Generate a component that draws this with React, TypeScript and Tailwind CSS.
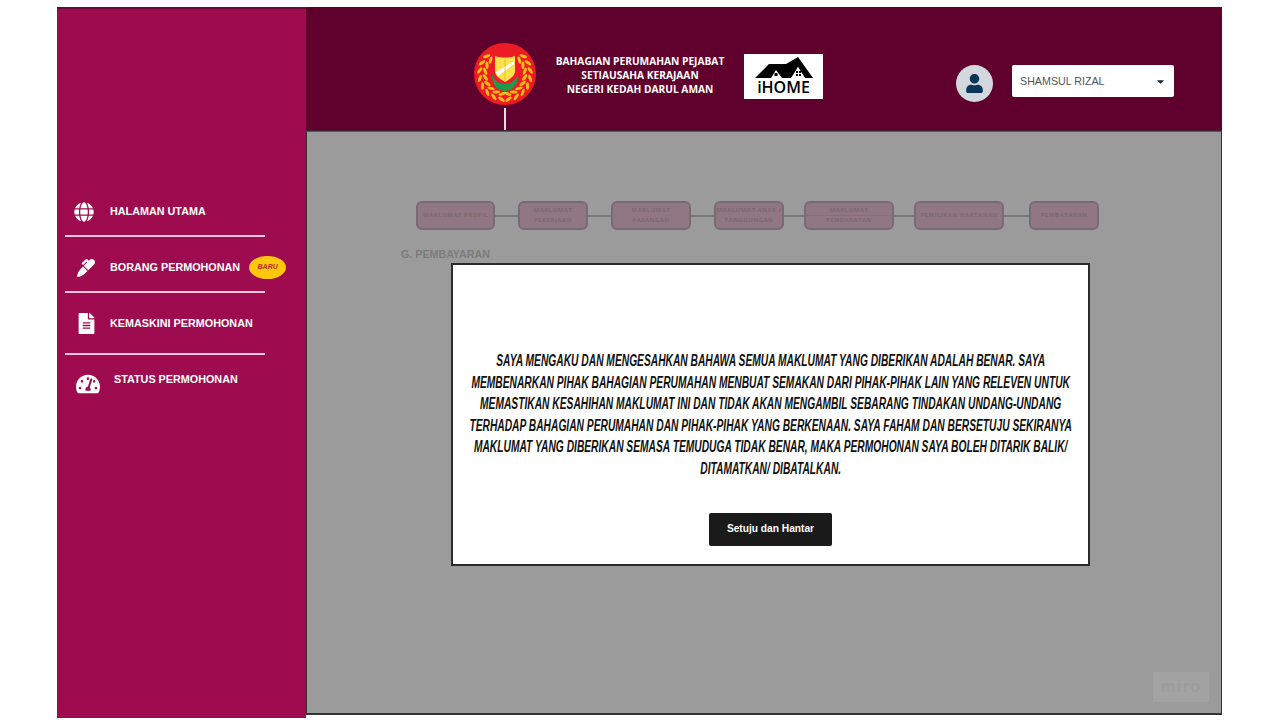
import { FaCaretDown, FaFileAlt, FaGlobe, FaMarker, FaTachometerAlt, FaUser } from 'react-icons/fa';

const steps = [
  { lines: ['MAKLUMAT PROFIL'], box: 'w-[79px]', gap: 'w-[23px]' },
  { lines: ['MAKLUMAT', 'PEKERJAAN'], box: 'w-[70px]', gap: 'w-[23px]' },
  { lines: ['MAKLUMAT', 'PASANGAN'], box: 'w-[80px]', gap: 'w-[23px]' },
  { lines: ['MAKLUMAT ANAK /', 'TANGGUNGAN'], box: 'w-[70px]', gap: 'w-[20px]' },
  { lines: ['MAKLUMAT', 'PENDAPATAN'], box: 'w-[90px]', gap: 'w-[20px]', crossed: true },
  { lines: ['PEMILIKAN HARTANAH'], box: 'w-[90px]', gap: 'w-[25px]' },
  { lines: ['PEMBAYARAN'], box: 'w-[70px]', gap: '' },
];

const declaration = [
  'Saya mengaku dan mengesahkan bahawa semua maklumat yang diberikan adalah benar. Saya',
  'membenarkan pihak Bahagian Perumahan menbuat semakan dari pihak-pihak lain yang releven untuk',
  'memastikan kesahihan maklumat ini dan tidak akan mengambil sebarang tindakan undang-undang',
  'terhadap Bahagian Perumahan dan pihak-pihak yang berkenaan. Saya faham dan bersetuju sekiranya',
  'maklumat yang diberikan semasa temuduga tidak benar, maka permohonan saya boleh ditarik balik/',
  'ditamatkan/ dibatalkan.',
];

// angle in degrees, measured from the bottom of the crest
const leaves = [8, 26, 44, 62, 80, 98, 116, 134];

const Crest = () => (
  <svg viewBox="0 0 62 62" className="w-[62px] h-[62px] shrink-0">
    <circle cx="31" cy="31" r="31" fill="#ed1c24" />
    {[1, -1].map((side) =>
      leaves.flatMap((deg) =>
        [
          { r: 20, tilt: 28 },
          { r: 25.5, tilt: -28 },
        ].map(({ r, tilt }) => {
          const t = (deg * Math.PI) / 180;
          const x = 31 + side * r * Math.sin(t);
          const y = 31 + r * Math.cos(t);
          return (
            <ellipse
              key={`${side}-${deg}-${r}`}
              cx={x}
              cy={y}
              rx="3.8"
              ry="1.5"
              fill="#fdc010"
              transform={`rotate(${side * (-deg + tilt)} ${x} ${y})`}
            />
          );
        }),
      ),
    )}
    <path d="M18 30c-1 10 5 18 13 18s14-8 13-18c-1 6-6 11-13 11s-12-5-13-11z" fill="#1f9a4b" />
    <path d="M21 13c6 2 14 2 20 0v15c0 5-5 8-10 11-5-3-10-6-10-11z" fill="#fbe14a" />
    <path d="M22 29 40 18v3L24 33z" fill="#fff" />
    <path d="M31 14v24" stroke="#d9a81c" strokeWidth="0.6" />
  </svg>
);

const HomeLogo = () => (
  <div className="w-[79px] h-[45px] bg-white shrink-0 flex flex-col items-center">
    <svg viewBox="0 0 79 26" className="w-[79px] h-[26px]">
      <path d="M11 24 25 10h17l12-7 15 21H61L54 13 47 24z" fill="#000" />
      <path d="M27 24l5-8 6 8z" fill="#fff" />
      <rect x="30.5" y="19" width="3" height="3" fill="#000" />
      <path d="M48 25l6-12 7 12z" fill="#fff" />
      <rect x="52" y="17" width="2" height="2" fill="#000" />
      <rect x="55" y="17" width="2" height="2" fill="#000" />
      <rect x="52" y="20" width="2" height="2" fill="#000" />
      <rect x="55" y="20" width="2" height="2" fill="#000" />
    </svg>
    <span className="text-[16px] leading-[15px] text-black font-['Open_Sans',sans-serif] font-semibold">iHOME</span>
  </div>
);

const Divider = () => <div className="w-[200px] h-[2px] ml-[8px] bg-[#f3c6dc]" />;

const App = () => {
  return (
    <div className="w-[1280px] h-[720px] bg-white flex pl-[57px] pt-[7px] overflow-hidden font-['Liberation_Sans',sans-serif]">
      {/* Sidebar */}
      <aside className="w-[249px] h-[711px] bg-[#9e0b4e] border-t-2 border-[#6d0a38] pt-[176px] text-white text-[10.8px] font-bold shrink-0">
        <div className="h-[50px] pt-[2px] flex items-center">
          <FaGlobe className="w-[20px] h-[20px] ml-[17px] mt-[2px]" />
          <span className="ml-[16px]">HALAMAN UTAMA</span>
        </div>
        <Divider />
        <div className="h-[54px] pt-[7px] flex items-center">
          <FaMarker className="w-[18px] h-[18px] ml-[20px]" />
          <span className="ml-[15px]">BORANG PERMOHONAN</span>
          <span className="ml-[9px] w-[37px] h-[23px] rounded-[50%] bg-[#fdc70c] text-[#c1272d] text-[7px] italic flex items-center justify-center">
            BARU
          </span>
        </div>
        <Divider />
        <div className="h-[60px] flex items-center">
          <FaFileAlt className="w-[17px] h-[21px] ml-[21px]" />
          <span className="ml-[15px]">KEMASKINI PERMOHONAN</span>
        </div>
        <Divider />
        <div className="h-[46px] pt-[2px] flex items-center">
          <FaTachometerAlt className="w-[24px] h-[22px] ml-[19px] mt-[10px]" />
          <span className="ml-[14px]">STATUS PERMOHONAN</span>
        </div>
      </aside>

      <div className="w-[916px] h-[708px] flex flex-col shrink-0">
        {/* Header */}
        <header className="h-[124px] bg-[#5f002d] flex items-start shrink-0 border-b border-[#3f2233]">
          <div className="ml-[168px] mt-[36px] flex flex-col items-center">
            <Crest />
            <div className="w-[1.5px] h-[22px] mt-[3px] bg-[#e8dce2]" />
          </div>
          <div className="w-[200px] ml-[4px] mt-[47px] text-center text-white text-[10.2px] leading-[14px] font-bold font-['Open_Sans',sans-serif]">
            BAHAGIAN PERUMAHAN PEJABAT
            <br />
            SETIAUSAHA KERAJAAN
            <br />
            NEGERI KEDAH DARUL AMAN
          </div>
          <div className="ml-[4px] mt-[47px]">
            <HomeLogo />
          </div>
          <div className="w-[37px] h-[37px] ml-[133px] mt-[58px] rounded-full bg-[#d3d8df] flex items-center justify-center">
            <FaUser className="w-[17px] h-[19px] text-[#0b3558]" />
          </div>
          <div className="w-[162px] h-[32px] ml-[19px] mt-[58px] bg-white rounded-[2px] flex items-center justify-between pl-[8px] pr-[8px] text-[10.7px] text-[#555]">
            SHAMSUL RIZAL
            <FaCaretDown className="w-[11px] h-[11px] text-[#0b2a45]" />
          </div>
        </header>

        {/* Content dimmed behind the modal */}
        <main className="relative flex-1 bg-[#9b9b9b] border-l border-r border-b-2 border-[#333] border-t border-t-[#555] pt-[69px] pl-[109px]">
          <div className="flex items-center">
            {steps.map((s) => (
              <div key={s.lines[0] + s.lines.length + s.box} className="flex items-center">
                <div
                  className={`${s.box} h-[29px] relative rounded-[6px] bg-[#917683] border-2 border-[#7a6a72] flex flex-col items-center justify-center text-[6px] leading-[9.5px] font-bold tracking-[0.5px] text-[#7b6a72] whitespace-nowrap font-['Open_Sans',sans-serif]`}
                >
                  {s.crossed && <div className="absolute left-0 right-0 top-[12px] h-[1px] bg-[#777]" />}
                  {s.lines.map((l) => (
                    <span key={l}>{l}</span>
                  ))}
                </div>
                {s.gap && <div className={`${s.gap} h-[2px] bg-[#777]`} />}
              </div>
            ))}
          </div>
          <div className="mt-[16px] -ml-[15px] text-[10.7px] font-bold text-[#7c7c7c]">G. PEMBAYARAN</div>

          {/* Modal */}
          <div className="absolute left-[144px] top-[131px] w-[639px] h-[303px] bg-white border-2 border-[#2b2b2b] flex flex-col items-center pt-[85px]">
            <p className="text-center uppercase italic font-bold text-[16px] leading-[21.6px] text-[#111] whitespace-nowrap scale-x-[0.64]">
              {declaration.map((l) => (
                <span key={l} className="block">
                  {l}
                </span>
              ))}
            </p>
            <button className="mt-[33px] w-[123px] h-[33px] rounded-[2px] bg-[#1a1a1a] text-white text-[10.2px] font-bold">
              Setuju dan Hantar
            </button>
          </div>

          {/* Watermark */}
          <div className="absolute right-[12px] bottom-[11px] w-[56px] h-[30px] bg-[#a3a3a3] flex items-center justify-center text-[17px] font-bold tracking-[1px] text-[#9c9c9f]">
            miro
          </div>
        </main>
      </div>
    </div>
  );
};

export default App;
